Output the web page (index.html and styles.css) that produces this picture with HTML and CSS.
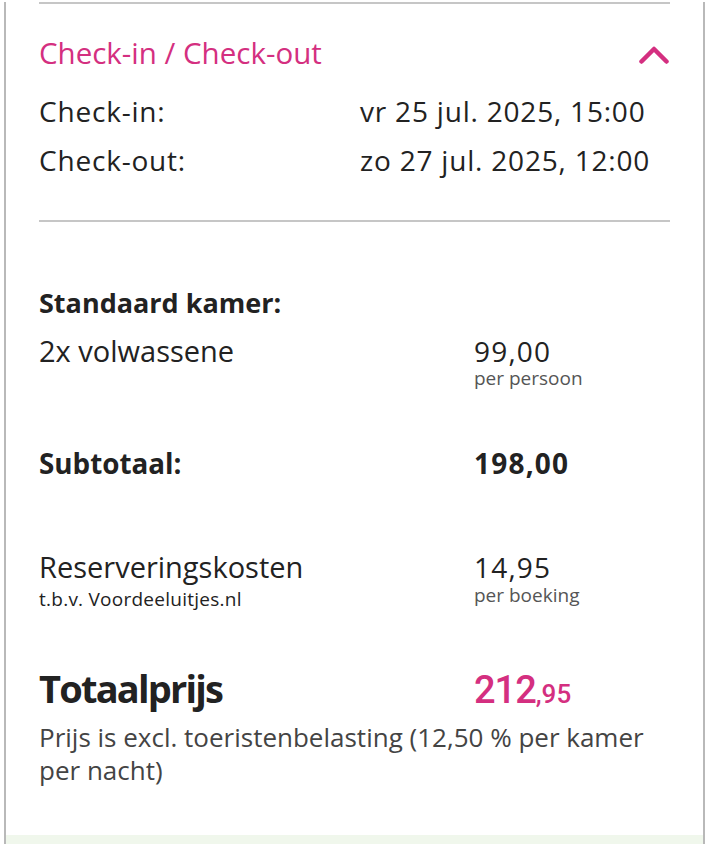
FILE: index.html
```html
<!DOCTYPE html>
<html lang="nl">
<head>
<meta charset="utf-8">
<title>Check-in / Check-out</title>
<link rel="stylesheet" href="styles.css">
</head>
<body>
<div class="card">
  <section class="stay">
    <div class="stay-head">
      <h2 class="stay-title">Check-in / Check-out</h2>
      <svg class="chev" viewBox="0 0 30 18" width="30" height="18" aria-hidden="true">
        <polyline points="2.5,15.5 15,3 27.5,15.5" fill="none" stroke="#d42f80" stroke-width="4.5" stroke-linecap="round" stroke-linejoin="round"/>
      </svg>
    </div>
    <div class="stay-rows">
      <div class="stay-row"><span>Check-in:</span><span>vr 25 jul. 2025, 15:00</span></div>
      <div class="stay-row"><span>Check-out:</span><span>zo 27 jul. 2025, 12:00</span></div>
    </div>
  </section>
  <section class="prices">
    <div class="room-title">Standaard kamer:</div>
    <div class="line line-adults">
      <div class="lbl">2x volwassene</div>
      <div class="val"><div class="amt">99,00</div><div class="unit">per persoon</div></div>
    </div>
    <div class="line line-sub">
      <div class="lbl strong">Subtotaal:</div>
      <div class="val"><div class="amt strong">198,00</div></div>
    </div>
    <div class="line line-fee">
      <div class="lbl"><div class="fee-name">Reserveringskosten</div><div class="fee-note">t.b.v. Voordeeluitjes.nl</div></div>
      <div class="val"><div class="amt">14,95</div><div class="unit unit-fee">per boeking</div></div>
    </div>
    <div class="line line-total">
      <div class="total-lbl">Totaalprijs</div>
      <div class="total-val"><span class="euros">212</span><span class="cents">,95</span></div>
    </div>
    <p class="tax-note">Prijs is excl. toeristenbelasting (12,50 % per kamer per nacht)</p>
  </section>
  <div class="band"></div>
</div>
</body>
</html>
```
FILE: styles.css
```css
* { box-sizing: border-box; }
html, body { margin: 0; padding: 0; background: #fff; }
body {
  font-family: "Open Sans", "Noto Sans", sans-serif;
  color: #222;
  height: 844px;
  overflow: hidden;
}
.card {
  margin-left: 4px;
  width: 701px;
  border-left: 2px solid #b9b9b9;
  border-right: 2px solid #b9b9b9;
  min-height: 844px;
}
.stay {
  margin: 2px 33px 0 33px;
  border-top: 2px solid #c6c6c6;
  border-bottom: 2px solid #c6c6c6;
  padding: 33px 0 35px;
}
.stay-head {
  display: flex;
  justify-content: space-between;
  align-items: flex-start;
}
.stay-title {
  margin: 0;
  font-size: 29.5px;
  font-weight: 400;
  line-height: 32px;
  color: #d42f80;
}
.chev { display: block; margin: 9px 1px 0 0; }
.stay-rows { margin-top: 18px; }
.stay-row {
  display: grid;
  grid-template-columns: 321px 1fr;
  font-size: 28px;
  letter-spacing: 0.8px;
  line-height: 49px;
}
.prices { padding: 65px 33px 0 33px; }
.room-title {
  font-size: 27px;
  font-weight: 700;
  line-height: 32px;
}
.line {
  display: grid;
  grid-template-columns: 435px 1fr;
}
.lbl { font-size: 29px; line-height: 32px; }
.lbl.strong { font-size: 27.8px; }
.strong { font-weight: 700; }
.amt { font-size: 28px; line-height: 32px; letter-spacing: 1.2px; }
.unit {
  font-size: 19px;
  line-height: 16px;
  margin-top: 3px;
  color: #555;
}
.unit-fee { margin-top: 4px; }
.line-adults { margin-top: 16px; }
.line-sub { margin-top: 61px; }
.line-fee { margin-top: 72px; }
.fee-name { font-size: 29px; line-height: 32px; }
.fee-note { font-size: 19px; letter-spacing: 0.25px; line-height: 20px; margin-top: 6px; }
.line-total { margin-top: 55px; align-items: baseline; }
.total-lbl { font-size: 38px; font-weight: 700; line-height: 48px; letter-spacing: -1.8px; }
.total-val { color: #d42f80; font-family: Roboto, sans-serif; font-weight: 500; }
.euros { font-size: 38px; letter-spacing: -1px; }
.cents { font-size: 26px; }
.tax-note {
  margin: 9px 0 0;
  font-size: 26px;
  line-height: 33px;
  color: #444;
}
.band {
  margin-top: 48px;
  height: 20px;
  background: #f0f7ec;
}
```
